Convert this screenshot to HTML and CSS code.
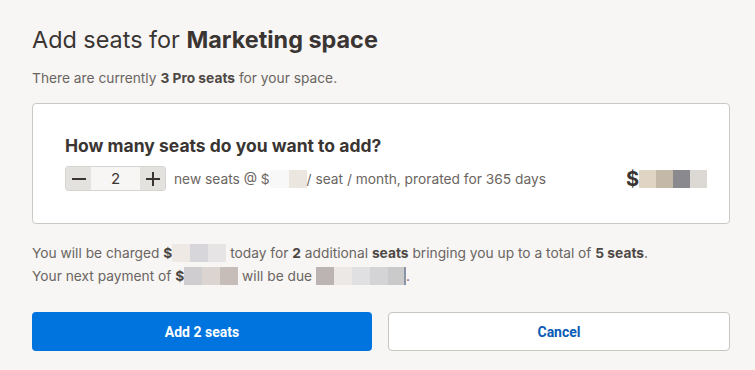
FILE: index.html
```html
<!DOCTYPE html>
<html>
<head>
<meta charset="utf-8">
<link rel="stylesheet" href="styles.css">
</head>
<body>
<div class="dialog">
  <h1 class="title">Add seats for <b>Marketing space</b></h1>
  <p class="sub">There are currently <b>3 Pro seats</b> for your space.</p>
  <div class="card">
    <h2 class="q">How many seats do you want to add?</h2>
    <div class="row">
      <div class="left">
        <div class="stepper">
          <span class="btn"><svg width="14" height="14" viewBox="0 0 14 14"><path d="M0 7h14" stroke="#3a3532" stroke-width="2"/></svg></span>
          <span class="val">2</span>
          <span class="btn"><svg width="14" height="14" viewBox="0 0 14 14"><path d="M0 7h14M7 0v14" stroke="#3a3532" stroke-width="2"/></svg></span>
        </div>
        <span class="desc">new seats @ $<span class="blur"><i class="b1"></i><i class="b2"></i></span>/ seat / month, prorated for 365 days</span>
      </div>
      <div class="price">$<span class="blur big"><i class="p1"></i><i class="p2"></i><i class="p3"></i><i class="p4"></i></span></div>
    </div>
  </div>
  <p class="info">You will be charged <b>$</b><span class="blur"><i class="c1"></i><i class="c2"></i><i class="c3"></i></span> today for <b>2</b> additional <b>seats</b> bringing you up to a total of <b>5 seats</b>.<br>Your next payment of <b>$</b><span class="blur"><i class="d1"></i><i class="d2"></i><i class="d3"></i></span> will be due <span class="blur"><i class="e1"></i><i class="e2"></i><i class="e3"></i><i class="e4"></i><i class="e5"></i></span>.</p>
  <div class="actions">
    <button class="primary">Add 2 seats</button>
    <button class="secondary">Cancel</button>
  </div>
</div>
</body>
</html>
```
FILE: styles.css
```css
html, body { margin: 0; padding: 0; background: #f7f6f5; }
body { font-family: Inter, "Noto Sans", sans-serif; color: #6b6561; }
.dialog { padding: 24px 25px 0 32px; }
.title { margin: 0; font-size: 23.4px; line-height: 32px; font-weight: 400; color: #3a3532; }
.title b { font-weight: 700; }
.sub { margin: 12px 0 0; font-size: 13.75px; line-height: 20px; }
.sub b, .info b { color: #4e4845; font-weight: 700; }
.card { margin-top: 15px; background: #fff; border: 1px solid #ccc8c4; border-radius: 4px; padding: 30px 22px 32px 32px; }
.q { margin: 0; font-size: 17.5px; line-height: 24px; font-weight: 700; color: #3a3532; }
.row { margin-top: 8px; display: flex; justify-content: space-between; align-items: center; }
.left { display: flex; align-items: center; gap: 8px; }
.stepper { display: flex; width: 101px; height: 25px; border: 1px solid #d6d3d0; border-radius: 3px; box-sizing: border-box; overflow: hidden; }
.btn { width: 25px; display: flex; align-items: center; justify-content: center; background: #e4e2df; }
.val { flex: 1; display: flex; align-items: center; justify-content: center; background: #f7f6f5; color: #3a3532; font-size: 15px; }
.desc { font-size: 13.75px; line-height: 20px; }
.blur { display: inline-flex; vertical-align: -4px; height: 18px; }
.blur i { display: block; width: 18px; height: 18px; }
.b1 { background: #f8f8f8; width: 19px !important; }
.b2 { background: #ece6e0; }
.price { font-size: 20px; font-weight: 700; color: #3a3532; display: flex; align-items: center; }
.big i { width: 17px; }
.p1 { background: #e0d4c4; } .p2 { background: #c4b8a8; } .p3 { background: #8a8a8e; } .p4 { background: #dcd8d4; }
.info { margin: 18px 0 0; font-size: 13.75px; line-height: 23px; }
.c1 { background: #efe9e6; } .c2 { background: #d7d6da; } .c3 { background: #e6e4e4; }
.d1 { background: #cfcdcf; } .d2 { background: #dcd4d0; } .d3 { background: #c6bcb8; }
.e1 { background: #bcb4b2; } .e2 { background: #ece8e6; } .e3 { background: #e0e0e2; } .e4 { background: #d4d4d6; } .e5 { background: #cacaca; border-right: 2px solid #8a92a8; width: 16px !important; }
.actions { margin-top: 24px; display: flex; gap: 16px; }
.actions button { flex: 1; height: 39px; border-radius: 4px; font-family: Roboto, Inter, sans-serif; font-size: 14px; font-weight: 700; cursor: pointer; }
.primary { background: #0074de; color: #fff; border: none; }
.secondary { background: #fff; color: #0a5bb5; border: 1px solid #c8c4c0; }
```
